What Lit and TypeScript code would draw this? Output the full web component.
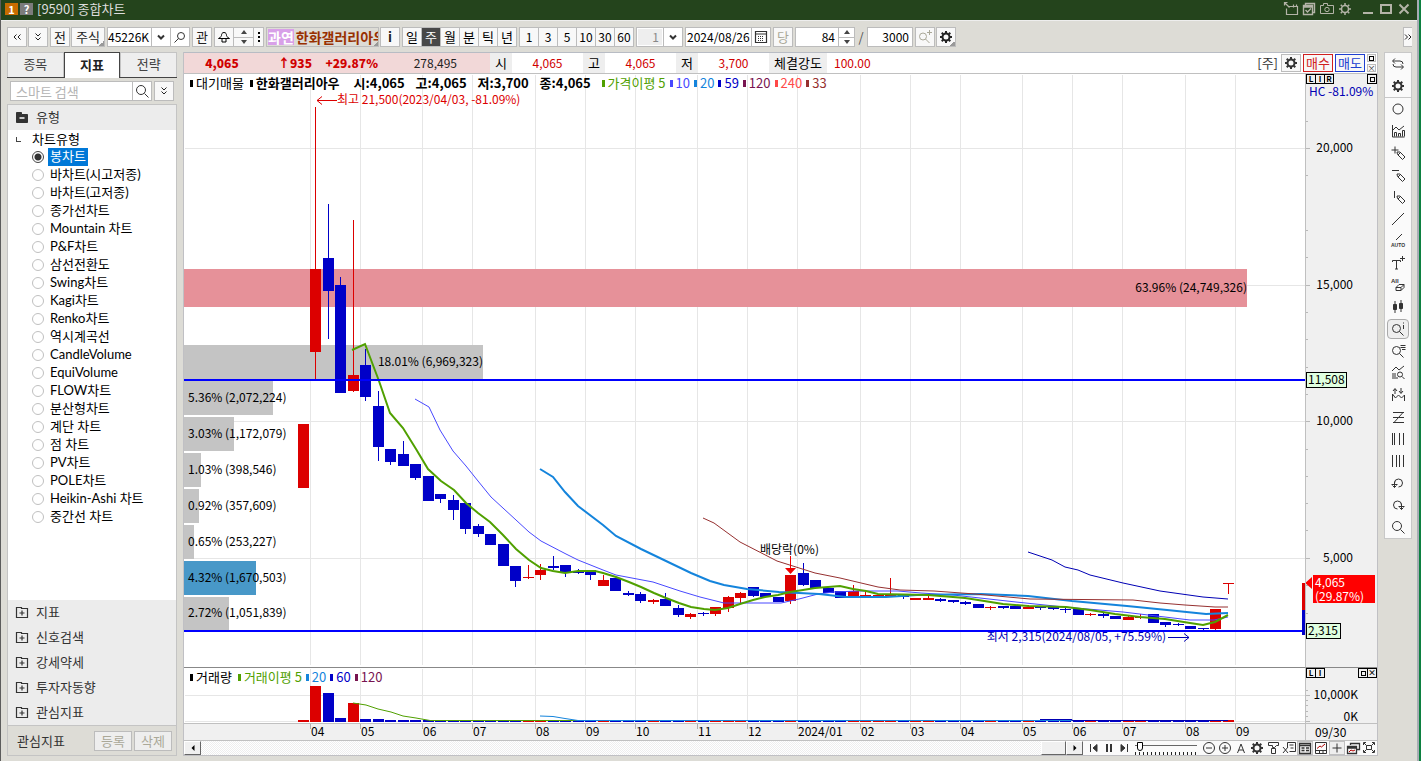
import { LitElement, html, svg, css } from "lit";
import { customElement, state } from "lit/decorators.js";
import { classMap } from "lit/directives/class-map.js";

type Candle = [string, number, number, number, number];

// direction, body top, body bottom, high, low
const CANDLES: Candle[] = [
  ["r", 424, 488, 424, 488], ["r", 269, 352, 107, 380], ["b", 258, 291, 204, 339], ["b", 285, 393, 277, 393],
  ["r", 375, 391, 220, 392], ["b", 365, 397, 349, 401], ["b", 406, 447, 391, 461], ["b", 449, 462, 449, 465],
  ["b", 454, 466, 441, 466], ["b", 464, 478, 464, 480], ["b", 476, 501, 476, 501], ["b", 494, 499, 494, 503],
  ["b", 500, 510, 495, 520], ["b", 503, 529, 503, 534], ["b", 526, 534, 524, 537], ["b", 534, 545, 534, 545],
  ["b", 544, 566, 544, 566], ["b", 566, 581, 566, 587], ["r", 577, 578, 565, 579], ["r", 570, 575, 564, 580],
  ["b", 566, 568, 556, 570], ["b", 565, 572, 565, 577], ["b", 571, 573, 569, 574], ["b", 570, 575, 570, 580],
  ["r", 580, 586, 575, 586], ["b", 578, 591, 578, 591], ["b", 593, 595, 591, 596], ["b", 594, 601, 592, 603],
  ["r", 600, 602, 599, 604], ["b", 599, 606, 593, 606], ["b", 608, 615, 605, 617], ["r", 614, 617, 613, 619],
  ["b", 613, 614, 612, 616], ["r", 607, 614, 607, 616], ["r", 597, 608, 596, 612], ["r", 593, 598, 592, 603],
  ["b", 587, 596, 587, 597], ["b", 593, 597, 593, 597], ["b", 597, 602, 597, 602], ["r", 575, 601, 575, 604],
  ["b", 573, 585, 563, 586], ["b", 580, 588, 580, 588], ["b", 588, 593, 588, 593], ["b", 591, 598, 591, 598],
  ["r", 591, 596, 585, 596], ["r", 595, 596, 590, 596], ["r", 595, 596, 594, 596], ["r", 594, 596, 578, 596],
  ["b", 595, 597, 595, 599], ["r", 598, 600, 598, 600], ["r", 598, 600, 596, 600], ["b", 599, 601, 598, 602],
  ["b", 600, 602, 600, 603], ["b", 602, 604, 601, 605], ["b", 604, 608, 604, 608], ["r", 607, 608, 606, 610],
  ["b", 606, 608, 606, 609], ["b", 606, 609, 606, 609], ["r", 607, 609, 605, 609], ["b", 607, 608, 607, 610],
  ["b", 607, 609, 607, 610], ["b", 609, 610, 607, 613], ["b", 608, 615, 608, 615], ["r", 614, 615, 613, 616],
  ["b", 614, 616, 613, 618], ["b", 616, 619, 616, 619], ["r", 617, 620, 616, 620], ["r", 617, 618, 614, 619],
  ["b", 614, 623, 614, 623], ["b", 622, 625, 622, 627], ["b", 624, 625, 623, 626], ["b", 626, 629, 626, 629],
  ["b", 628, 629, 628, 630], ["r", 609, 629, 609, 630], ["r", 583, 584, 583, 594],
];
const FILL: Record<string, string> = { r: "#dc0000", b: "#0000c8" };

const AVERAGES = [
  { color: "#4848ff", width: 1, pts: "415,399 429,407 440,430 453,451 466,466 478,481 491,497 516,520 529,532 541,541 566,554 578,560 603,570 616,575 653,582 680,591 700,597 716,601 724,603 781,603 799,599 818,594 834,592 858,591 898,591 921,593 953,595 1016,602 1064,607 1123,612 1190,620 1214,620 1228,617" },
  { color: "#1484dc", width: 2, pts: "540,469 553,477 565,492 578,506 603,525 616,536 641,549 666,561 691,573 710,581 724,585 747,589 779,592 819,594 846,597 886,597 917,595 981,594 1028,596 1072,601 1127,606 1167,610 1206,614 1228,613" },
  { color: "#0000b4", width: 1, pts: "1028,552 1052,560 1065,567 1078,570 1090,575 1123,583 1160,591 1203,597 1228,599" },
  { color: "#963030", width: 1, pts: "703,518 714,523 740,542 777,561 815,573 840,578 878,587 900,590 934,591 975,594 1030,599 1133,600 1160,603 1185,605 1215,607 1228,607" },
  { color: "#50a000", width: 2, pts: "352,350 365,344 379,381 390,413 403,428 416,449 428,469 441,481 454,490 466,503 478,513 490,522 503,535 516,549 529,560 541,568 553,571 565,573 578,571 595,571 603,573 616,577 629,582 641,587 654,593 666,598 679,603 691,607 704,609 715,610 728,608 740,604 753,600 765,597 778,595 790,592 803,590 815,588 828,587 840,586 853,589 866,591 878,594 928,595 953,597 965,598 978,600 1003,604 1028,606 1066,607 1090,610 1115,614 1140,617 1165,619 1190,623 1203,625 1215,622 1228,615" },
];

// top, height, right edge, label, label end, fill
const PROFILE: [number, number, number, string, number, string][] = [
  [269, 38, 1247, "63.96% (24,749,326)", 1247, "#e69199"],
  [345, 35, 483, "18.01% (6,969,323)", 483, "#c4c4c4"],
  [381, 34, 273, "5.36% (2,072,224)", 0, "#c4c4c4"],
  [417, 34, 234, "3.03% (1,172,079)", 0, "#c4c4c4"],
  [453, 34, 201, "1.03% (398,546)", 0, "#c4c4c4"],
  [489, 34, 199, "0.92% (357,609)", 0, "#c4c4c4"],
  [525, 34, 194, "0.65% (253,227)", 0, "#c4c4c4"],
  [561, 34, 256, "4.32% (1,670,503)", 0, "#4898c8"],
  [597, 33, 229, "2.72% (1,051,839)", 0, "#c4c4c4"],
];

const MONTHS: [number, string][] = [
  [310, "04"], [360, "05"], [422, "06"], [472, "07"], [535, "08"], [585, "09"], [635, "10"], [697, "11"], [747, "12"],
  [797, "2024/01"], [860, "02"], [910, "03"], [960, "04"], [1022, "05"], [1072, "06"], [1122, "07"], [1185, "08"], [1235, "09"],
];

const CHART_TYPES = ["봉차트", "바차트(시고저종)", "바차트(고저종)", "종가선차트", "Mountain 차트", "P&F차트", "삼선전환도", "Swing차트",
  "Kagi차트", "Renko차트", "역시계곡선", "CandleVolume", "EquiVolume", "FLOW차트", "분산형차트", "계단 차트", "점 차트", "PV차트",
  "POLE차트", "Heikin-Ashi 차트", "중간선 차트"];

const gearTeeth = [0, 45, 90, 135, 180, 225, 270, 315];
const mag = svg`<circle cx="6.5" cy="7.5" r="4"/><path d="M9.5 10.5l4 4"/>`;
const pencil = svg`<path d="M7 7h3l5 5-2.500 2.500-5-5zM8 10l2.500-2.500"/>`;

const ICONS: Record<string, unknown> = {
  gear: svg`<circle cx="8" cy="8" r="3.500" stroke-width="2"/>${gearTeeth.map((a) => svg`<path stroke-width="2" d="M8 2v2" transform="rotate(${a} 8 8)"/>`)}`,
  gearThin: svg`<circle cx="8" cy="8" r="3.500" stroke-width="1.500"/>${gearTeeth.map((a) => svg`<path stroke-width="1.500" d="M8 2v2" transform="rotate(${a} 8 8)"/>`)}`,
  search: svg`<circle cx="7" cy="7" r="4.500"/><path d="M10.500 10.500l4 4"/>`,
  searchLeft: svg`<circle cx="9" cy="7" r="3.500"/><path d="M6.500 9.500l-4 4"/>`,
  dblLeft: svg`<path d="M7.500 5.500l-2.500 2.500 2.500 2.500M11.500 5.500l-2.500 2.500 2.500 2.500"/>`,
  dblRight: svg`<path d="M5 5.500l2.500 2.500-2.500 2.500M8.500 5.500l2.500 2.500-2.500 2.500"/>`,
  dblDown: svg`<path d="M5.500 4.500l2.500 2.500 2.500-2.500M5.500 8.500l2.500 2.500 2.500-2.500"/>`,
  down: svg`<path stroke-width="2" d="M5 6.500l3 3 3-3"/>`,
  bell: svg`<path d="M8 3.500c-2 0-2.500 1.500-2.500 3s-2 2-3 3h11c-1-1-3-1.500-3-3s-.500-3-2.500-3zM6 9.500v3.500h4V9.500"/>`,
  dots: svg`<path stroke-width="2" d="M8 3v2M8 7v2M8 11v2"/>`,
  calendar: svg`<path d="M2.500 2.500h11v11h-11zM2.500 5h11" stroke-width="1.200"/><path stroke-dasharray="1 1" d="M5 7.500h6M5 9.500h6M5 11.500h6"/>`,
  searchPlus: svg`<circle cx="6" cy="7.500" r="3.500"/><path d="M8.500 10l4 4M12.500 1v5M10 3.500h5"/>`,
  attach: svg`<path d="M5.500 5.500h9v8h-11v-6M10.500 3.500v3M13.500 3.500v2M6.500 6.500l-5-5M1.500 4.500v-3h3" stroke-width="1.200"/>`,
  windows: svg`<path d="M4.500 4.500v-2h9v9h-2M2.500 4.500h9v9h-9zM2.500 6h9M4.500 9l2 2 3.500-3.500" stroke-width="1.400"/>`,
  camera: svg`<path d="M1.500 4.500h3v-2h4v2h6v8h-13z"/><circle cx="8" cy="8.500" r="2.200"/>`,
  min: svg`<path stroke-width="2" d="M3 12h10"/>`,
  max: svg`<path stroke-width="2" d="M3 4h10v8H3z"/>`,
  close: svg`<path stroke-width="2" d="M3.500 3.500l9 9M12.500 3.500l-9 9"/>`,
  swap: svg`<path d="M5 2.500L2.500 5 5 7.500M3 5h7q3 0 3 3M11 8.500l2.500 2.500-2.500 2.500M13 11H6q-3 0-3-3"/>`,
  circle: svg`<circle cx="8" cy="8" r="5"/>`,
  bars: svg`<path d="M2.500 2v12h12M4.500 13.500v-4h2v4M8.500 13.500v-3h2v3M12.500 13.500v-6h2v6M3 7l3-3 3 3 5-4"/>`,
  plusPen: svg`<path d="M5 1.500v7M1.500 5h7"/>${pencil}`,
  minusPen: svg`<path d="M2 3.500h7"/>${pencil}`,
  barPen: svg`<path d="M4.500 2v7"/>${pencil}`,
  slash: svg`<path d="M2 14L14 2"/>`,
  auto: svg`<path d="M6 7l6-6"/><text x="8" y="14" text-anchor="middle" font-size="5" font-weight="700" font-family="Liberation Sans, sans-serif" fill="currentColor" stroke="none">AUTO</text>`,
  textPlus: svg`<path d="M2.500 7v-1.500h8V7M6.500 5.500V14M5 14h3M12.500 1v5M10 3.500h5"/>`,
  all: svg`<text x="1" y="6" font-size="6" font-weight="700" font-family="Liberation Sans, sans-serif" fill="currentColor" stroke="none">All</text><path d="M6 10.500l3-3h5l-3 3zM6 10.500v3h5l3-3v-3M11 10.500v3"/>`,
  candles: svg`<path d="M5 2v12M11 1v12"/><path fill="currentColor" d="M3.500 5.500h3v5h-3zM9.500 4.500h3v5h-3z"/>`,
  magInfo: svg`${mag}<path d="M13.500 4v4M13.500 1.500v1"/>`,
  magList: svg`${mag}<path d="M10.500 2.500h5M10.500 4.500h5M12 6.500h3.500"/>`,
  chartMag: svg`<path d="M2 6l4-4 3 3 5-4M2 9h4M2 11h4M2 13h6"/><circle cx="10" cy="9.500" r="2.500"/><path d="M12 11.500l2.500 2.500"/>`,
  wave: svg`<path d="M2.500 14V7l3 4 3-3 3 3 3-3v6M3 4l2-2.500L7 4M5 2v5M9 4l2 2.500L13 4M11 6V1"/>`,
  zline: svg`<path d="M3 3.500h11M3 8.500h11M3 13.500h11M13 3.500L4 13.500"/>`,
  vlines: svg`<path d="M2.500 2v12M4.500 2v12M9.500 2v12M13.500 2v12"/>`,
  vlines2: svg`<path d="M2.500 2v12M6.500 2v12M9.500 2v12M13.500 2v12"/>`,
  undo: svg`<path d="M4.500 8a4 4 0 1 1 4 4M1.500 9.500h6M4.500 6.500v6M2.500 10.500l2 2 2-2"/>`,
  redo: svg`<path d="M11.500 8a4 4 0 1 0-4 4M8.500 9.500h6M11.500 6.500v6M9.500 10.500l2 2 2-2"/>`,
  prev: svg`<path d="M4.500 4v8"/><path fill="currentColor" d="M11 4.500v7l-4-3.500z"/>`,
  pause: svg`<path stroke-width="2" d="M6 4v8M10 4v8"/>`,
  next: svg`<path d="M11.500 4v8"/><path fill="currentColor" d="M5 4.500v7L9 8z"/>`,
  left: svg`<path fill="currentColor" stroke="none" d="M9.500 5v6l-3-3z"/>`,
  right: svg`<path fill="currentColor" stroke="none" d="M6.500 5v6l3-3z"/>`,
  zoomOut: svg`<circle cx="8" cy="8" r="5.500"/><path d="M5 8h6"/>`,
  zoomIn: svg`<circle cx="8" cy="8" r="5.500"/><path d="M5 8h6M8 5v6"/>`,
  font: svg`<path d="M4.500 13L8 4l3.500 9M6 10h4"/>`,
  brush: svg`<path d="M3.500 2.500h10v3h-2l-2 2h-2v-2h-4zM6.500 8.500h4v5h-4z"/>`,
  excel: svg`<path d="M6.500 7V2.500h8v9h-6M8.500 5h4M9.500 8h3M2 7l5 6M7 7l-5 6"/>`,
  grid: svg`<path stroke-width="1.300" d="M2.500 3.500h11v10h-11zM2.500 5.500h11M4.500 8h3M4.500 10.500h3M9 8h3M9 10.500h3"/>`,
  redChart: svg`<path d="M2.500 2.500h11v11h-11zM2.500 10.500h11M6.500 10.500v3M10 10.500v3"/><path stroke="#b00000" d="M4 8.500l3-2.500 1.500 1L12 4"/>`,
  plus: svg`<path d="M8 3.500v9M3.500 8h9"/>`,
  stack: svg`<path stroke-width="1.300" d="M5.500 5V3.500h9v6H12M2.500 6.500h9v7h-9zM2.500 8h9"/><path stroke="#b00000" d="M4 12l2-2 2 1 2-1"/>`,
  expand: svg`<path d="M5.500 5.500h5v4h-5zM2.500 5V2.500H5M11 2.500h2.500V5M2.500 10v2.500H5M11 12.500h2.500V10M3 3l2.500 2.500M13 3l-2.500 2.500M3 12l2.500-2.500M13 12l-2.500-2.500"/>`,
  folderPlus: svg`<path stroke-width="1.200" d="M2.500 3.500h5v1h6v9h-11zM8 6.500v5M5.500 9h5"/>`,
  folderMinus: svg`<path fill="currentColor" d="M2.500 3.500h5v2h6v8h-11z"/><path stroke="#fff" stroke-width="1.500" d="M5.500 9h5"/>`,
};
const icon = (name: string, size = 16) =>
  html`<svg class="icon" width=${size} height=${size} viewBox="0 0 16 16" fill="none" stroke="currentColor" aria-hidden="true">${ICONS[name]}</svg>`;

const TOOLS = ["swap", "gear", "circle", "bars", "plusPen", "minusPen", "barPen", "slash", "auto", "textPlus", "all", "candles", "magInfo",
  "magList", "chartMag", "wave", "zline", "vlines", "vlines2", "undo", "redo", "search"];

@customElement("app-root")
export class AppRoot extends LitElement {
  @state() private selected = "봉차트";

  static styles = css`
    :host { display: block; height: 100vh; box-sizing: border-box; background: #0c8040; padding-right: 2px; font-family: "Noto Sans CJK KR", "Noto Sans", sans-serif; font-size: 13px; line-height: 16px; color: #000; }
    * { box-sizing: border-box; }
    button, input, select { font: inherit; color: inherit; margin: 0; padding: 0; border-radius: 0; outline: 0; }
    button { display: flex; align-items: center; justify-content: center; white-space: nowrap; }
    .icon { display: block; flex: none; }
    .window { height: 100%; display: flex; flex-direction: column; background: #dddcd6; border-left: 1px solid #5c5c5c; border-right: 2px solid #a8acb4; }
    .title { height: 20px; flex: none; display: flex; align-items: center; background: #24441c; color: #ddd; padding: 0 5px 2px 4px; gap: 2px; }
    .badge { width: 13px; height: 12px; font-weight: 700; font-size: 11px; line-height: 12px; text-align: center; background: #c86c00; color: #fff; }
    .badge.help { background: #7c7c7c; }
    .title h1 { margin: 0 auto 0 2px; font-size: 13px; font-weight: 400; }
    .title button { background: none; border: 0; color: #b4b4a8; width: 16px; height: 16px; }
    .title .wide { margin-left: 5px; }
    .toolbar { height: 32px; flex: none; display: flex; align-items: center; gap: 2px; padding: 0 5px 0 6px; border-top: 1px solid #eee; }
    .grp { display: flex; gap: 1px; }
    .seg { display: flex; border: 1px solid #bcbcbc; background: #f8f8f8; height: 20px; }
    .seg > button { width: 19px; border: 0; border-left: 1px solid #bcbcbc; background: none; }
    .seg > button:first-child { width: 18px; border-left: 0; }
    .seg > button.on { background: #484848; color: #fff; }
    .num { font-size: 12px; }
    .btn { height: 20px; width: 20px; border: 1px solid #bcbcbc; background: #f8f8f8; color: #222; }
    .btn.off { color: #aaa898; }
    .btn.mid { width: 34px; }
    .toolbar .drop { background-image: linear-gradient(135deg, transparent 50%, #999 50%); background-size: 5px 5px; background-position: 100% 100%; background-repeat: no-repeat; }
    .field { display: flex; height: 20px; border: 1px solid #bcbcbc; background: #fff; font-size: 12px; min-width: 0; }
    .field input { border: 0; background: none; min-width: 0; width: 0; flex: 1; height: 18px; }
    .field button { width: 19px; flex: none; border: 0; border-left: 1px solid #bcbcbc; background: #fff; color: #333; }
    .code { width: 83px; } .count { width: 47px; } .date { width: 86px; padding-left: 1px; } .step { width: 60px; } .total { width: 46px; }
    .field .thin { color: #888; background: #eee; border: 1px solid #fff; }
    .right { text-align: right; padding-right: 3px; }
    .spin { display: grid; grid-template-rows: 1fr 1fr; width: 16px; border-left: 1px solid #bcbcbc; }
    .spin button { width: auto; height: 9px; border: 0; background: none; }
    .spin button + button { border-top: 1px solid #bcbcbc; }
    .tri { width: 0; border: 3px solid transparent; border-top: 0; border-bottom: 4px solid #444; }
    .tri.dn { border-bottom: 0; border-top: 4px solid #444; }
    .seg .spin { width: 20px; }
    .seg > .narrow { width: 10px; overflow: hidden; }
    .ticker { width: 113px; height: 20px; border: 1px solid #bcbcbc; overflow: hidden; justify-content: flex-start; background-color: #dddcd6; font-weight: 700; font-size: 14px; color: #983000; gap: 2px; padding: 0 1px; }
    .ticker mark { background: #d8a0e8; color: #fff; line-height: 16px; }
    .slash { width: 8px; text-align: center; color: #555; }
    .more { margin-left: auto; width: 9px; overflow: hidden; border-right: 0; }
    .body { flex: 1; min-height: 0; display: flex; padding: 0 5px 5px 6px; gap: 6px; align-items: stretch; }
    .side { width: 170px; flex: none; display: flex; flex-direction: column; }
    .tabs { display: flex; height: 26px; border-bottom: 1px solid #444; flex: none; }
    .tabs button { flex: 1; border: 1px solid #c4c4c4; border-bottom: 0; background: #eee; color: #444; height: 25px; padding-bottom: 2px; }
    .tabs button.on { background: #fff; border-color: #444; font-weight: 700; height: 26px; color: #222; }
    .find { display: flex; gap: 2px; padding: 3px; flex: none; }
    .find .field { flex: 1; padding-left: 5px; font-size: 13px; }
    .find .btn { flex: none; }
    .find input::placeholder { color: #b4b4b4; opacity: 1; }
    .tree { flex: 1; min-height: 0; overflow: hidden; border: 1px solid #c4c4c4; background: #fff; display: flex; flex-direction: column; }
    .sect { display: flex; align-items: center; gap: 6px; height: 25px; flex: none; background: #ececec; padding: 0 0 1px 6px; border: 0; color: #333; justify-content: flex-start; }
    .types { margin: 0; padding: 0; border: 0; flex: 1; min-height: 0; min-width: 0; font-family: Lato, "Noto Sans CJK KR", sans-serif; }
    .types legend { padding: 0 0 0 8px; height: 18px; display: flex; align-items: center; gap: 11px; }
    .corner { width: 5px; height: 5px; border-left: 1px solid #444; border-bottom: 1px solid #444; }
    .types label { display: flex; align-items: center; height: 18px; padding-left: 24px; gap: 4px; }
    .types label span { padding: 0 2px; height: 18px; line-height: 16px; }
    .types .on span { background: #0078d7; color: #fff; }
    .types input { appearance: none; width: 12px; height: 12px; border: 1px solid #c0c0c0; border-radius: 50%; background: #fff; }
    .types input:checked { border-color: #444; background: radial-gradient(#333 3px, #fff 4px); }
    .favs { height: 30px; flex: none; display: flex; align-items: center; gap: 2px; padding: 0 4px 0 9px; border: 1px solid #c4c4c4; border-top: 0; color: #333; }
    .favs span { flex: 1; }
    .favs .btn { width: 38px; background: #eee; }
    .panel { flex: 1; min-width: 0; display: grid; grid-template-columns: minmax(0, 1fr) 72px; grid-template-rows: 22px minmax(0, 1fr) 56px 17px 15px; border: 1px solid #c0c0c4; border-top: 0; background: #fff; }
    .quote { grid-column: 1 / 3; display: flex; align-items: center; border-top: 1px solid #b8bcc4; border-bottom: 1px solid #c0c0c0; font-size: 12px; color: #d00000; }
    .quote > span { flex: none; line-height: 20px; height: 20px; text-align: center; }
    .quote .pink { background: #f2d8d8; display: grid; grid-template-columns: 76px 52px 66px 112px; text-align: right; font-weight: 700; }
    .pink b:first-child { text-align: center; }
    .pink .amount { font-weight: 400; color: #222; padding-right: 33px; }
    .quote .lab { width: 22px; background: #eee; color: #000; font-size: 13px; }
    .quote .lab.wide { width: 58px; }
    .quote .val { width: 71px; }
    .quote .power { padding-left: 7px; }
    .quote .end { margin-left: auto; color: #333; padding-right: 3px; font-size: 13px; }
    .quote button { height: 18px; margin-right: 2px; border: 1px solid #bcbcbc; background: #f8f8f8; width: 20px; color: #333; font-size: 13px; }
    .quote .buy { width: 30px; border-color: #d02020; color: #d02020; }
    .quote .sell { width: 30px; border-color: #2040d0; color: #2040d0; }
    .quote .mini { display: grid; gap: 1px; height: 18px; margin-right: 1px; }
    .quote .mini button { width: 9px; height: 8px; margin: 0; font-size: 8px; }
    .layer { display: grid; overflow: hidden; min-height: 0; min-width: 0; }
    .layer > * { grid-area: 1 / 1; }
    .layer svg.plot { display: block; width: 100%; height: 100%; }
    svg.plot text { font-size: 12px; }
    .axis { background: #f0f0f0; border-left: 1px solid #c0c0c0; }
    .vol { border-top: 1px solid #888; }
    .legend { display: flex; align-items: center; align-self: start; height: 18px; gap: 6px; padding-left: 6px; white-space: nowrap; }
    .legend span { display: flex; align-items: center; gap: 3px; }
    .legend span::before { content: ""; width: 3px; height: 7px; background: currentColor; }
    .legend b { width: 56px; }
    .legend b.first { margin-left: 8px; }
    .keys { display: flex; gap: 4px; }
    .flags { display: flex; align-self: start; }
    .flags button { width: 10px; height: 10px; border: 1px solid #000; margin-right: -1px; background: #f0f0f0; font-size: 8px; line-height: 8px; font-weight: 700; }
    .flags .push { margin-left: auto; }
    .flags button:last-child { margin-right: 0; }
    .box { width: 5px; height: 5px; border: 1px solid #000; }
    .months { background: #f0f0f0; border-top: 1px solid #c0c0c0; overflow: hidden; }
    .last { padding-left: 9px; font-size: 12px; line-height: 16px; border-left: 1px solid #c0c0c0; }
    .foot { grid-column: 1 / 3; display: flex; border-top: 1px solid #c0c0c0; background: #fafafa; color: #333; }
    .foot button { width: 16px; border: 0; background: none; }
    .foot .boxed { background: #eee; box-shadow: inset 0 0 0 1px #c0c0c0; }
    .scroll { flex: 1; display: flex; background: repeating-conic-gradient(#eee 0 25%, #fff 0 50%) 0 0 / 2px 2px; margin-right: 3px; }
    .scroll button { background: #f0f0f0; border: 1px solid; border-color: #fff #666 #666 #fff; width: 17px; color: #000; }
    .scroll .thumb { margin-left: auto; width: 25px; }
    .media { display: flex; margin-right: 4px; }
    .media button { width: 15px; }
    .slider { appearance: none; width: 62px; height: 14px; margin-right: 4px; background:
      linear-gradient(#666, #666) 0 4px / 100% 1px no-repeat,
      repeating-linear-gradient(90deg, #222 0 1px, transparent 1px 4px) 0 11px / 100% 3px no-repeat; }
    .slider::-webkit-slider-thumb { appearance: none; width: 6px; height: 9px; border: 1px solid #000; background: #fff; border-radius: 0 0 3px 3px; margin-bottom: 3px; }
    .tools { width: 28px; align-self: flex-start; border: 1px solid #c8c8c8; background: #fafafa; flex: none; color: #333; }
    .tools button { width: 22px; height: 22px; margin: 0 auto; border: 1px solid transparent; background: none; }
    .tools button.on { background: #eee; border-color: #aaa; border-radius: 4px; height: 20px; margin: 1px auto; }
    .tools hr { margin: 0; border: 0; border-top: 1px solid #c8c8c8; }
  `;

  private spin() {
    return html`<span class="spin"><button aria-label="증가"><i class="tri"></i></button><button aria-label="감소"><i class="tri dn"></i></button></span>`;
  }

  private toolbar() {
    return html`<div class="toolbar">
      <div class="grp"><button class="btn" aria-label="이전">${icon("dblLeft")}</button><button class="btn" aria-label="펼침">${icon("dblDown")}</button></div>
      <div class="grp"><button class="btn">전</button><button class="btn mid drop">주식</button></div>
      <div class="field code"><input aria-label="종목코드" value="45226K" /><button aria-label="목록">${icon("down")}</button><button aria-label="찾기">${icon("searchLeft")}</button></div>
      <button class="btn">관</button>
      <div class="seg"><button aria-label="알림">${icon("bell")}</button>${this.spin()}<button class="narrow" aria-label="메뉴">${icon("dots")}</button></div>
      <div class="grp"><button class="ticker drop"><mark>과연</mark>한화갤러리아우</button><button class="btn"><b>i</b></button></div>
      <div class="seg">${["일", "주", "월", "분", "틱", "년"].map((t) => html`<button class=${t === "주" ? "on" : ""}>${t}</button>`)}</div>
      <div class="seg num">${["1", "3", "5", "10", "30", "60"].map((t) => html`<button>${t}</button>`)}</div>
      <div class="field count"><input class="right thin" aria-label="간격" value="1" /><button aria-label="간격 목록">${icon("down")}</button></div>
      <div class="field date"><input aria-label="날짜" value="2024/08/26" /><button aria-label="달력">${icon("calendar")}</button></div>
      <button class="btn off">당</button>
      <div class="field step"><input class="right" aria-label="표시 개수" value="84" />${this.spin()}</div>
      <span class="slash">/</span>
      <div class="field total"><input class="right" aria-label="전체 개수" value="3000" /></div>
      <div class="grp"><button class="btn off" aria-label="확대">${icon("searchPlus")}</button><button class="btn drop" aria-label="설정">${icon("gear")}</button></div>
      <button class="btn more" aria-label="더보기">${icon("dblRight")}</button>
    </div>`;
  }

  private sidebar() {
    return html`<aside class="side">
      <nav class="tabs"><button>종목</button><button class="on">지표</button><button>전략</button></nav>
      <div class="find"><div class="field"><input aria-label="스마트 검색" placeholder="스마트 검색" /><button aria-label="검색">${icon("search")}</button></div><button class="btn" aria-label="펼치기">${icon("dblDown")}</button></div>
      <div class="tree">
        <button class="sect">${icon("folderMinus")}유형</button>
        <fieldset class="types">
          <legend><i class="corner"></i>차트유형</legend>
          ${CHART_TYPES.map((t) => html`<label class=${classMap({ on: t === this.selected })}><input type="radio" name="type" .checked=${t === this.selected} @change=${() => (this.selected = t)} /><span>${t}</span></label>`)}
        </fieldset>
        ${["지표", "신호검색", "강세약세", "투자자동향", "관심지표"].map((t) => html`<button class="sect">${icon("folderPlus")}${t}</button>`)}
      </div>
      <div class="favs"><span>관심지표</span><button class="btn off">등록</button><button class="btn off">삭제</button></div>
    </aside>`;
  }

  private quote() {
    const cell = (l: string, v: string) => html`<span class="lab">${l}</span><span class="val">${v}</span>`;
    return html`<div class="quote">
      <span class="pink"><b>4,065</b><b>↑935</b><b>+29.87%</b><span class="amount">278,495</span></span>
      ${cell("시", "4,065")}${cell("고", "4,065")}${cell("저", "3,700")}
      <span class="lab wide">체결강도</span><span class="power">100.00</span>
      <span class="end">[주]</span><button aria-label="설정">${icon("gear")}</button><button class="buy">매수</button><button class="sell">매도</button>
      <div class="mini"><button aria-label="최대화"><i class="box"></i></button><button aria-label="닫기">×</button></div>
    </div>`;
  }

  private pricePlot() {
    return html`<div class="layer">
      <svg class="plot" role="img" aria-label="가격 차트"><g transform="translate(-184 -74)">
        <g stroke="#e6e6e6" shape-rendering="crispEdges">
          ${MONTHS.map(([x]) => svg`<path d="M${x + 0.5} 75V665"/>`)}
          ${[148.5, 285.5, 421.5, 558.5].map((y) => svg`<line x1="185" x2="200%" y1=${y} y2=${y} />`)}
        </g>
        ${PROFILE.map(([y, h, r, , , f]) => svg`<rect x="184" y=${y} width=${r - 184} height=${h} fill=${f} />`)}
        <g shape-rendering="crispEdges">${CANDLES.map(([c, t, b, hi, lo], i) => {
          const x = Math.floor(303 + i * 12.5);
          return svg`<rect x=${x} y=${hi} width="1" height=${lo - hi} fill=${FILL[c]} /><rect x=${x - 5} y=${t} width="11" height=${b - t} fill=${FILL[c]} />`;
        })}</g>
        <text x="1166" y="641" text-anchor="end" fill="#0000b4">최저 2,315(2024/08/05, +75.59%)</text>
        <path d="M1168 637.500h21m-5-4l5 4-5 4" fill="none" stroke="#0000b4" />
        ${AVERAGES.map((a) => svg`<polyline points=${a.pts} fill="none" stroke=${a.color} stroke-width=${a.width} />`)}
        <g stroke="#0000ff" stroke-width="2"><line x1="184" x2="200%" y1="380" y2="380" /><line x1="184" x2="200%" y1="631" y2="631" /></g>
        ${PROFILE.map(([y, h, , label, end]) => svg`<text x=${end || 188} y=${y + Math.floor(h / 2) + 4} text-anchor=${end ? "end" : "start"}>${label}</text>`)}
        <path d="M337 100.500h-20m5-4l-5 4 5 4" fill="none" stroke="#dc0000" />
        <text x="337" y="104" fill="#dc0000">최고 21,500(2023/04/03, -81.09%)</text>
        <text x="760" y="554">배당락(0%)</text>
        <path d="M790.500 556v14" stroke="#f00000" /><path d="M785 568h11l-5.500 6z" fill="#f00000" />
      </g>
      <svg x="100%" overflow="visible"><path d="M-3 509h3v27h-3z" fill="#dc0000" /><path d="M-3 536h3v25h-3z" fill="#0000c8" /></svg></svg>
      <div class="legend"><span>대기매물</span><span><strong>한화갤러리아우</strong></span>
        <b class="first">시:4,065</b><b>고:4,065</b><b>저:3,700</b><b>종:4,065</b>
        ${this.keys([["가격이평 5", "#50a000"], ["10", "#4848ff"], ["20", "#1484dc"], ["59", "#0000c8"], ["120", "#781450"], ["240", "#ff4848"], ["33", "#963030"]])}
      </div>
    </div>`;
  }

  private keys(list: [string, string][]) {
    return html`<div class="keys">${list.map(([t, c]) => html`<span style="color:${c}">${t}</span>`)}</div>`;
  }

  private priceAxis() {
    const labels: [number, string][] = [[148, "20,000"], [285, "15,000"], [421, "10,000"], [558, "5,000"]];
    return html`<div class="layer axis">
      <svg class="plot" role="img" aria-label="가격 축"><g transform="translate(-1306 -74)">
        <g stroke="#b8b8b8" shape-rendering="crispEdges">
          ${[121, 175, 230, 257, 312, 339, 367, 394, 449, 476, 503, 530, 585, 613].map((y) => svg`<path d="M1306 ${y + 0.5}h2"/>`)}
          ${labels.map(([y]) => svg`<path d="M1306 ${y + 0.5}h4"/>`)}
        </g>
        ${labels.map(([y, t]) => svg`<text x="1353" y=${y + 4} text-anchor="end">${t}</text>`)}
        <text x="1309" y="96" fill="#0000b4">HC -81.09%</text>
        <g stroke="#000" fill="#e0ffe0" shape-rendering="crispEdges"><rect x="1306.500" y="372.500" width="40" height="15"/><rect x="1306.500" y="623.500" width="34" height="15"/></g>
        <text x="1308" y="384">11,508</text><text x="1308" y="635">2,315</text>
        <path d="M1312 577v12l-7-6z" fill="#f00" /><rect x="1313" y="575" width="62" height="28" fill="#f00" />
        <text x="1315" y="587" fill="#fff">4,065</text><text x="1315" y="601" fill="#fff">(29.87%)</text>
      </g></svg>
      <div class="flags"><button>L</button><button>I</button><button>R</button><button class="push" aria-label="최대화"><i class="box"></i></button></div>
    </div>`;
  }

  private volumePlot() {
    const tall: Record<number, number> = { 0: 720, 1: 686, 2: 693, 3: 718, 4: 703, 5: 719, 6: 719 };
    return html`<div class="layer vol">
      <svg class="plot" role="img" aria-label="거래량 차트"><g transform="translate(-184 -668)">
        <g stroke="#e6e6e6" shape-rendering="crispEdges">
          ${MONTHS.map(([x]) => svg`<path d="M${x + 0.5} 669V722"/>`)}
          ${[695.5, 721.5].map((y) => svg`<line x1="185" x2="200%" y1=${y} y2=${y} />`)}
        </g>
        <g shape-rendering="crispEdges">${CANDLES.map(([c], i) => {
          const y = tall[i] ?? 720;
          return svg`<rect x=${Math.floor(303 + i * 12.5) - 5} y=${y} width="11" height=${722 - y} fill=${FILL[c]} />`;
        })}</g>
        <g fill="none"><path stroke="#50a000" d="M353 703l13 2 12 4 13 3 12 4 13 2 14 2.500h798"/><path stroke="#1484dc" d="M540 716l13 .500 12 2 13 2h650"/><path stroke="#0000b4" d="M1040 719.500h32v1h156"/></g>
      </g></svg>
      <div class="legend"><span>거래량</span>${this.keys([["거래이평 5", "#50a000"], ["20", "#1484dc"], ["60", "#0000c8"], ["120", "#781450"]])}</div>
    </div>`;
  }

  private volumeAxis() {
    return html`<div class="layer axis vol">
      <svg class="plot" role="img" aria-label="거래량 축"><g transform="translate(-1306 -668)">
        <g stroke="#b8b8b8" shape-rendering="crispEdges">${[690, 695, 700, 705, 711, 716, 721].map((y) => svg`<path d="M1306 ${y + 0.5}h${y === 695 || y === 721 ? 4 : 2}"/>`)}</g>
        <text x="1358" y="699" text-anchor="end">10,000K</text><text x="1358" y="721" text-anchor="end">0K</text>
      </g></svg>
      <div class="flags"><button>L</button><button>I</button><button class="push" aria-label="최대화"><i class="box"></i></button><button aria-label="닫기">×</button></div>
    </div>`;
  }

  private footer() {
    const names = ["zoomOut", "zoomIn", "font", "gear", "brush", "excel", "grid", "redChart", "plus", "stack", "expand"];
    return html`<div class="foot">
      <div class="scroll"><button aria-label="왼쪽">${icon("left")}</button><button class="thumb" aria-label="스크롤"></button><button aria-label="오른쪽">${icon("right")}</button></div>
      <div class="media">${["prev", "pause", "next"].map((n) => html`<button aria-label=${n}>${icon(n)}</button>`)}</div>
      <input class="slider" type="range" aria-label="속도" min="0" max="100" value="3" />
      ${names.map((n) => html`<button class=${n === "grid" || n === "plus" ? "boxed" : ""} aria-label=${n}>${icon(n)}</button>`)}
    </div>`;
  }

  render() {
    return html`<div class="window">
      <header class="title"><span class="badge">1</span><span class="badge help">?</span><h1>[9590] 종합차트</h1>
        ${["attach", "windows", "camera", "gearThin"].map((n) => html`<button aria-label=${n}>${icon(n)}</button>`)}
        ${["min", "max", "close"].map((n, i) => html`<button class=${i ? "" : "wide"} aria-label=${n}>${icon(n)}</button>`)}
      </header>
      ${this.toolbar()}
      <main class="body">
        ${this.sidebar()}
        <section class="panel">
          ${this.quote()}${this.pricePlot()}${this.priceAxis()}${this.volumePlot()}${this.volumeAxis()}
          <svg class="plot months" width="100%" height="17"><g transform="translate(-184 -724)">
            ${MONTHS.map(([x, t]) => svg`<path d="M${x + 0.5} 724v5" stroke="#b0b0b0"/><text x=${x + 1} y="736">${t}</text>`)}
          </g></svg>
          <div class="months last">09/30</div>
          ${this.footer()}
        </section>
        <div class="tools">${TOOLS.map((n, i) => html`${i === 2 ? html`<hr />` : ""}<button class=${n === "magInfo" ? "on" : ""} aria-label=${n}>${icon(n)}</button>`)}</div>
      </main>
    </div>`;
  }
}
